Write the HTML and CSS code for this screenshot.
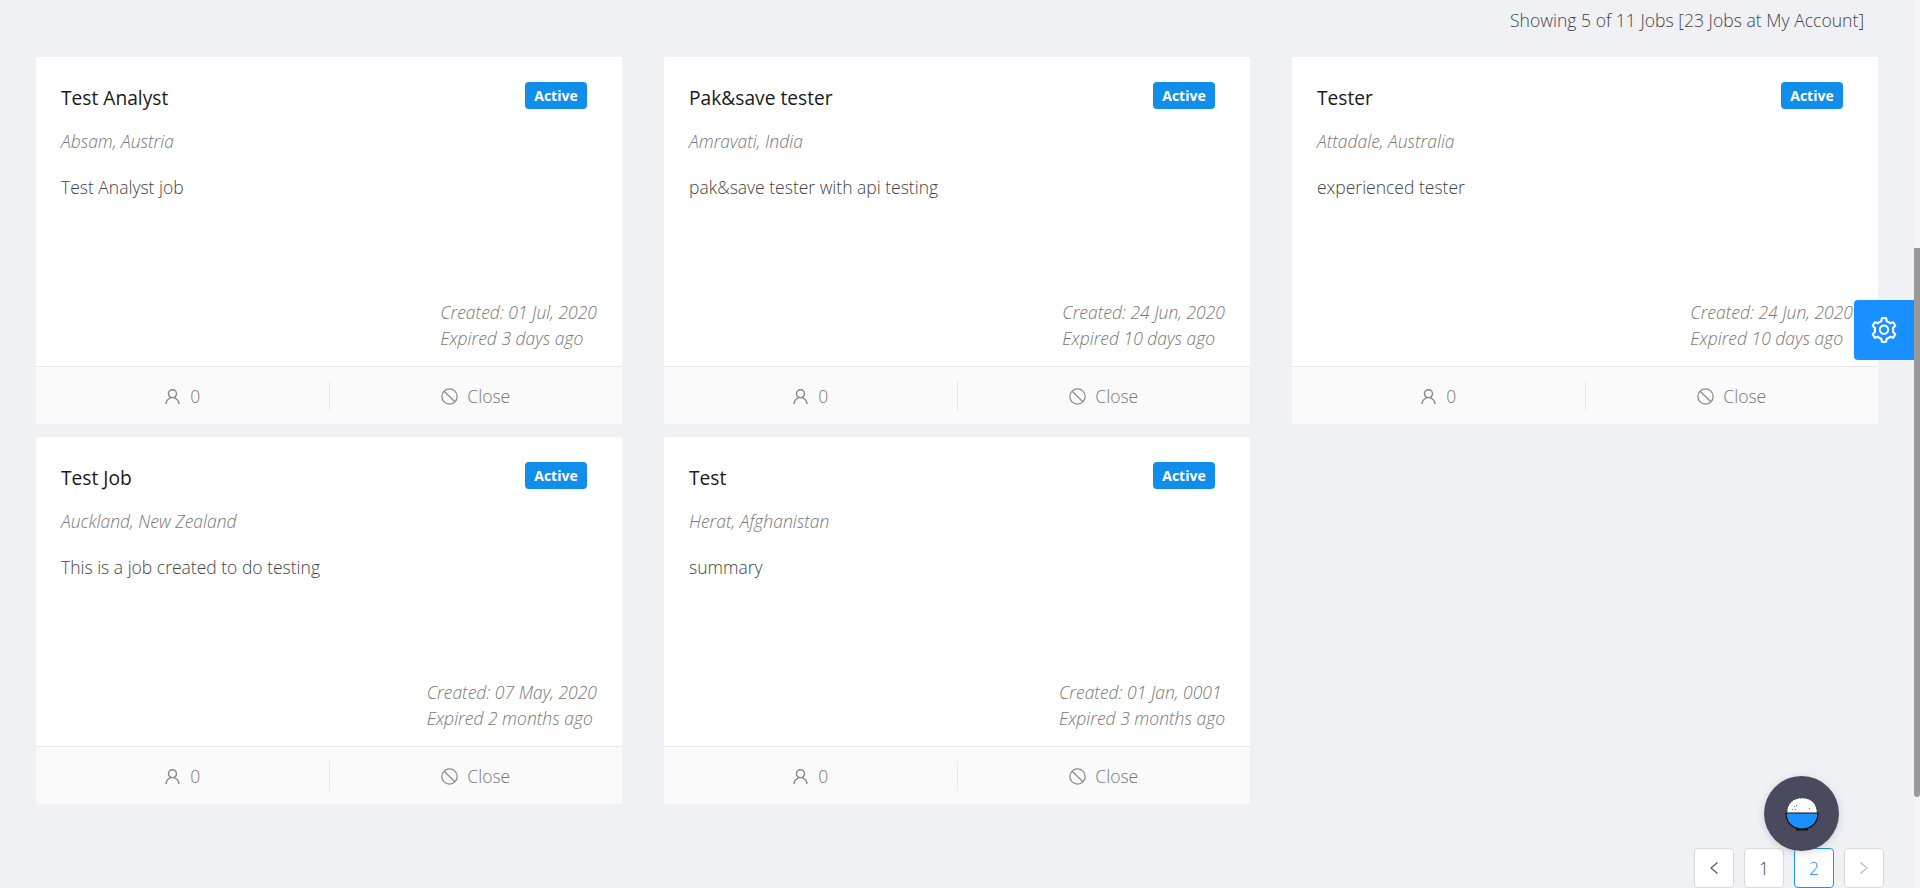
FILE: index.html
```html
<!DOCTYPE html>
<html>
<head>
  <meta name="viewport" content="width=device-width">
  <title>Jobs</title>
  <link rel="stylesheet" href="styles.css">
</head>
<body>
<svg class="defs" width="0" height="0">
  <symbol id="i-user" viewBox="64 64 896 896"><path d="M858.5 763.6a374 374 0 0 0-80.6-119.5 375.63 375.63 0 0 0-119.5-80.6c-.4-.2-.8-.3-1.2-.5C719.5 518 760 444.7 760 362c0-137-111-248-248-248S264 225 264 362c0 82.7 40.5 156 102.8 201.1-.4.2-.8.3-1.2.5-44.8 18.9-85 46-119.5 80.6a375.63 375.63 0 0 0-80.6 119.5A371.7 371.7 0 0 0 136 901.8a8 8 0 0 0 8 8.2h60c4.4 0 7.9-3.5 8-7.8 2-77.2 33-149.5 87.8-204.3 56.7-56.7 132-87.9 212.2-87.9s155.5 31.2 212.2 87.9C779 752.7 810 825 812 902.2c.1 4.4 3.6 7.8 8 7.8h60a8 8 0 0 0 8-8.2c-1-47.8-10.9-94.3-29.5-138.2zM512 534c-45.9 0-89.1-17.9-121.6-50.4S340 407.9 340 362c0-45.9 17.9-89.1 50.4-121.6S466.1 190 512 190s89.1 17.9 121.6 50.4S684 316.1 684 362c0 45.9-17.9 89.1-50.4 121.6S557.9 534 512 534z"/></symbol>
  <symbol id="i-stop" viewBox="0 0 16 16"><circle cx="8" cy="8" r="7.2" fill="none" stroke="currentColor" stroke-width="1.2"/><line x1="3" y1="3" x2="13" y2="13" stroke="currentColor" stroke-width="1.2"/></symbol>
</svg>

<main class="page">
  <p class="count">Showing 5 of 11 Jobs [23 Jobs at My Account]</p>

  <section class="jobs">
    <article class="card">
      <div class="card-body">
        <div class="card-top"><h3>Test Analyst</h3><span class="badge">Active</span></div>
        <p class="place">Absam, Austria</p>
        <p class="summary">Test Analyst job</p>
        <p class="dates">Created: 01 Jul, 2020<br>Expired 3 days ago</p>
      </div>
      <ul class="actions">
        <li><svg class="ico"><use href="#i-user"/></svg>0</li>
        <li><svg class="ico"><use href="#i-stop"/></svg>Close</li>
      </ul>
    </article>

    <article class="card">
      <div class="card-body">
        <div class="card-top"><h3>Pak&amp;save tester</h3><span class="badge">Active</span></div>
        <p class="place">Amravati, India</p>
        <p class="summary">pak&amp;save tester with api testing</p>
        <p class="dates">Created: 24 Jun, 2020<br>Expired 10 days ago</p>
      </div>
      <ul class="actions">
        <li><svg class="ico"><use href="#i-user"/></svg>0</li>
        <li><svg class="ico"><use href="#i-stop"/></svg>Close</li>
      </ul>
    </article>

    <article class="card">
      <div class="card-body">
        <div class="card-top"><h3>Tester</h3><span class="badge">Active</span></div>
        <p class="place">Attadale, Australia</p>
        <p class="summary">experienced tester</p>
        <p class="dates">Created: 24 Jun, 2020<br>Expired 10 days ago</p>
      </div>
      <ul class="actions">
        <li><svg class="ico"><use href="#i-user"/></svg>0</li>
        <li><svg class="ico"><use href="#i-stop"/></svg>Close</li>
      </ul>
    </article>

    <article class="card">
      <div class="card-body">
        <div class="card-top"><h3>Test Job</h3><span class="badge">Active</span></div>
        <p class="place">Auckland, New Zealand</p>
        <p class="summary">This is a job created to do testing</p>
        <p class="dates">Created: 07 May, 2020<br>Expired 2 months ago</p>
      </div>
      <ul class="actions">
        <li><svg class="ico"><use href="#i-user"/></svg>0</li>
        <li><svg class="ico"><use href="#i-stop"/></svg>Close</li>
      </ul>
    </article>

    <article class="card">
      <div class="card-body">
        <div class="card-top"><h3>Test</h3><span class="badge">Active</span></div>
        <p class="place">Herat, Afghanistan</p>
        <p class="summary">summary</p>
        <p class="dates">Created: 01 Jan, 0001<br>Expired 3 months ago</p>
      </div>
      <ul class="actions">
        <li><svg class="ico"><use href="#i-user"/></svg>0</li>
        <li><svg class="ico"><use href="#i-stop"/></svg>Close</li>
      </ul>
    </article>
  </section>

  <nav class="pager">
    <a class="pg"><svg width="12" height="14" viewBox="0 0 12 14"><polyline points="9.5,1.5 3,7 9.5,12.5" fill="none" stroke="#595959" stroke-width="1.2"/></svg></a>
    <a class="pg">1</a>
    <a class="pg on">2</a>
    <a class="pg"><svg width="12" height="14" viewBox="0 0 12 14"><polyline points="2.5,1.5 9,7 2.5,12.5" fill="none" stroke="#bfbfbf" stroke-width="1.2"/></svg></a>
  </nav>
</main>

<button class="gear">
  <svg width="26" height="26" viewBox="64 64 896 896" fill="#fff"><path d="M924.8 625.7l-65.5-56c3.1-19 4.7-38.4 4.7-57.8s-1.6-38.8-4.7-57.8l65.5-56a32.03 32.03 0 0 0 9.3-35.2l-.9-2.6a443.74 443.74 0 0 0-79.7-137.9l-1.8-2.1a32.12 32.12 0 0 0-35.1-9.5l-81.3 28.9c-30-24.6-63.5-44-99.7-57.6l-15.7-85a32.05 32.05 0 0 0-25.8-25.7l-2.7-.5c-52.1-9.4-106.9-9.4-159 0l-2.7.5a32.05 32.05 0 0 0-25.8 25.7l-15.8 85.4a351.86 351.86 0 0 0-99 57.4l-81.9-29.1a32 32 0 0 0-35.1 9.5l-1.8 2.1a446.02 446.02 0 0 0-79.7 137.9l-.9 2.6c-4.5 12.5-.8 26.5 9.3 35.2l66.3 56.6c-3.1 18.8-4.6 38-4.6 57.1 0 19.2 1.5 38.4 4.6 57.1L99 625.5a32.03 32.03 0 0 0-9.3 35.2l.9 2.6c18.1 50.4 44.9 96.9 79.7 137.9l1.8 2.1a32.12 32.12 0 0 0 35.1 9.5l81.9-29.1c29.8 24.5 63.1 43.9 99 57.4l15.8 85.4a32.05 32.05 0 0 0 25.8 25.7l2.7.5a449.4 449.4 0 0 0 159 0l2.7-.5a32.05 32.05 0 0 0 25.8-25.7l15.7-85a350 350 0 0 0 99.7-57.6l81.3 28.9a32 32 0 0 0 35.1-9.5l1.8-2.1c34.8-41.1 61.6-87.5 79.7-137.9l.9-2.6c4.5-12.3.8-26.3-9.3-35zM788.3 465.9c2.5 15.1 3.8 30.6 3.8 46.1s-1.3 31-3.8 46.1l-6.6 40.1 74.7 63.9a370.03 370.03 0 0 1-42.6 73.6L721 702.8l-31.4 25.8c-23.9 19.6-50.5 35-79.3 45.8l-38.1 14.3-17.9 97a377.5 377.5 0 0 1-85 0l-17.9-97.2-37.8-14.5c-28.5-10.8-55-26.2-78.7-45.7l-31.4-25.9-93.4 33.2c-17-22.9-31.2-47.6-42.6-73.6l75.5-64.5-6.5-40c-2.4-14.9-3.7-30.3-3.7-45.5 0-15.3 1.2-30.6 3.7-45.5l6.5-40-75.5-64.5c11.3-26.1 25.6-50.7 42.6-73.6l93.4 33.2 31.4-25.9c23.7-19.5 50.2-34.9 78.7-45.7l37.9-14.3 17.9-97.2c28.1-3.2 56.8-3.2 85 0l17.9 97 38.1 14.3c28.7 10.8 55.4 26.2 79.3 45.8l31.4 25.8 92.8-32.9c17 22.9 31.2 47.6 42.6 73.6L781.8 426l6.5 39.9zM512 326c-97.2 0-176 78.8-176 176s78.8 176 176 176 176-78.8 176-176-78.8-176-176-176zm79.2 255.2A111.6 111.6 0 0 1 512 614c-29.9 0-58-11.7-79.2-32.8A111.6 111.6 0 0 1 400 502c0-29.9 11.7-58 32.8-79.2C454 401.6 482.1 390 512 390c29.9 0 58 11.6 79.2 32.8A111.6 111.6 0 0 1 624 502c0 29.9-11.7 58-32.8 79.2z"/></svg>
</button>

<button class="fab">
  <svg width="34" height="34" viewBox="0 0 34 34">
    <path d="M2 16 C2 6 9 1 17 1 C25 1 32 6 32 16 Z" fill="#fff"/>
    <path d="M1 16 H33 C33 26 26 32 17 32 C8 32 1 26 1 16 Z" fill="#1890ff" stroke="#111" stroke-width="1.2"/>
    <path d="M11 32 H23 V33.5 H11 Z" fill="#111"/>
    <path d="M2 15 C2 6 9 1 17 1 C25 1 32 6 32 15" fill="none" stroke="#333" stroke-width=".8" stroke-dasharray="1.5 1.5"/>
    <g fill="#777"><rect x="9" y="9" width="1" height="1"/><rect x="10" y="12" width="1" height="1"/><rect x="7" y="12" width="1" height="1"/><rect x="24" y="11" width="1" height="1"/><rect x="11" y="8" width="1" height="1"/></g>
  </svg>
</button>

<div class="scroll"><div class="thumb"></div></div>
</body>
</html>
```

FILE: styles.css
```css
* { box-sizing: border-box; }
html, body { height: 100%; }
body {
    margin: 0;
    height: 888px;
    overflow: hidden;
    background: #f0f1f5;
    font-family: "Open Sans", "Noto Sans", sans-serif;
    font-size: 17.5px;
    color: #595959;
}
.defs { position: absolute; }

.page { width: 1914px; height: 888px; overflow: hidden; padding: 0 35px 0 36px; }
.count {
    margin: 0;
    height: 57px;
    padding: 8px 15px 0 0;
    text-align: right;
    font-size: 17.6px;
    line-height: 24px;
    font-weight: 300;
    color: #444;
}

.jobs {
    display: grid;
    grid-template-columns: repeat(3, 586px);
    grid-auto-rows: 367px;
    column-gap: 42px;
    row-gap: 13px;
}
.card {
    display: flex;
    flex-direction: column;
    background: #fff;
    border-radius: 2px;
    overflow: hidden;
}
.card-body { flex: 1; padding: 25px 25px 0; position: relative; }
.card-top { display: flex; justify-content: space-between; padding-right: 10px; }
.card-top h3 {
    margin: 0;
    padding-top: 2px;
    font-size: 19.2px;
    line-height: 28px;
    font-weight: 500;
    color: #1a1a1a;
}
.badge {
    width: 62px;
    height: 27px;
    line-height: 27px;
    text-align: center;
    background: #108ee9;
    color: #fff;
    border-radius: 4px;
    font-size: 14px;
    font-weight: 700;
}
.place {
    margin: 0;
    padding-top: 17px;
    font-size: 17.5px;
    line-height: 24px;
    font-style: italic;
    font-weight: 300;
    color: #777;
}
.summary {
    margin: 0;
    padding-top: 22px;
    font-size: 17.5px;
    line-height: 24px;
    font-weight: 300;
    color: #444;
}
.dates {
    position: absolute;
    right: 25px;
    bottom: 15px;
    margin: 0;
    font-size: 17.5px;
    line-height: 26px;
    font-style: italic;
    font-weight: 300;
    color: #777;
}

.actions {
    display: flex;
    margin: 0;
    padding: 14px 0 13px;
    height: 58px;
    list-style: none;
    background: #fafafa;
    border-top: 1px solid #e8e8e8;
}
.actions li {
    flex: 1;
    display: flex;
    align-items: center;
    justify-content: center;
    gap: 9px;
    font-size: 17.5px;
    font-weight: 300;
    color: #777;
}
.actions li:first-child { border-right: 1px solid #e8e8e8; }
.ico { width: 17px; height: 17px; fill: #8c8c8c; color: #8c8c8c; }

.pager {
    display: flex;
    justify-content: flex-end;
    gap: 10px;
    margin: 44px -5px 0 0;
}
.pg {
    width: 40px;
    height: 40px;
    display: flex;
    align-items: center;
    justify-content: center;
    background: #fff;
    border: 1px solid #d9d9d9;
    border-radius: 4px;
    font-size: 17.5px;
    font-weight: 300;
    color: #444;
}
.pg.on { border-color: #1890ff; color: #1890ff; }

/* things that float over the page */
.gear {
    position: fixed;
    left: 1854px;
    top: 300px;
    width: 60px;
    height: 60px;
    display: flex;
    align-items: center;
    justify-content: center;
    padding: 0;
    border: 0;
    background: #1890ff;
    border-radius: 4px 0 0 4px;
}
.fab {
    position: fixed;
    left: 1764px;
    top: 776px;
    width: 75px;
    height: 75px;
    display: flex;
    align-items: center;
    justify-content: center;
    padding: 0;
    border: 0;
    border-radius: 50%;
    background: #4a4a5e;
    box-shadow: 0 2px 8px rgba(0,0,0,.15);
}
.scroll {
    position: fixed;
    left: 1914px;
    top: 0;
    width: 6px;
    height: 888px;
    background: #f5f5f7;
}
.thumb {
    margin-top: 248px;
    height: 549px;
    background: #999;
    border-radius: 0 0 3px 3px;
}
```
